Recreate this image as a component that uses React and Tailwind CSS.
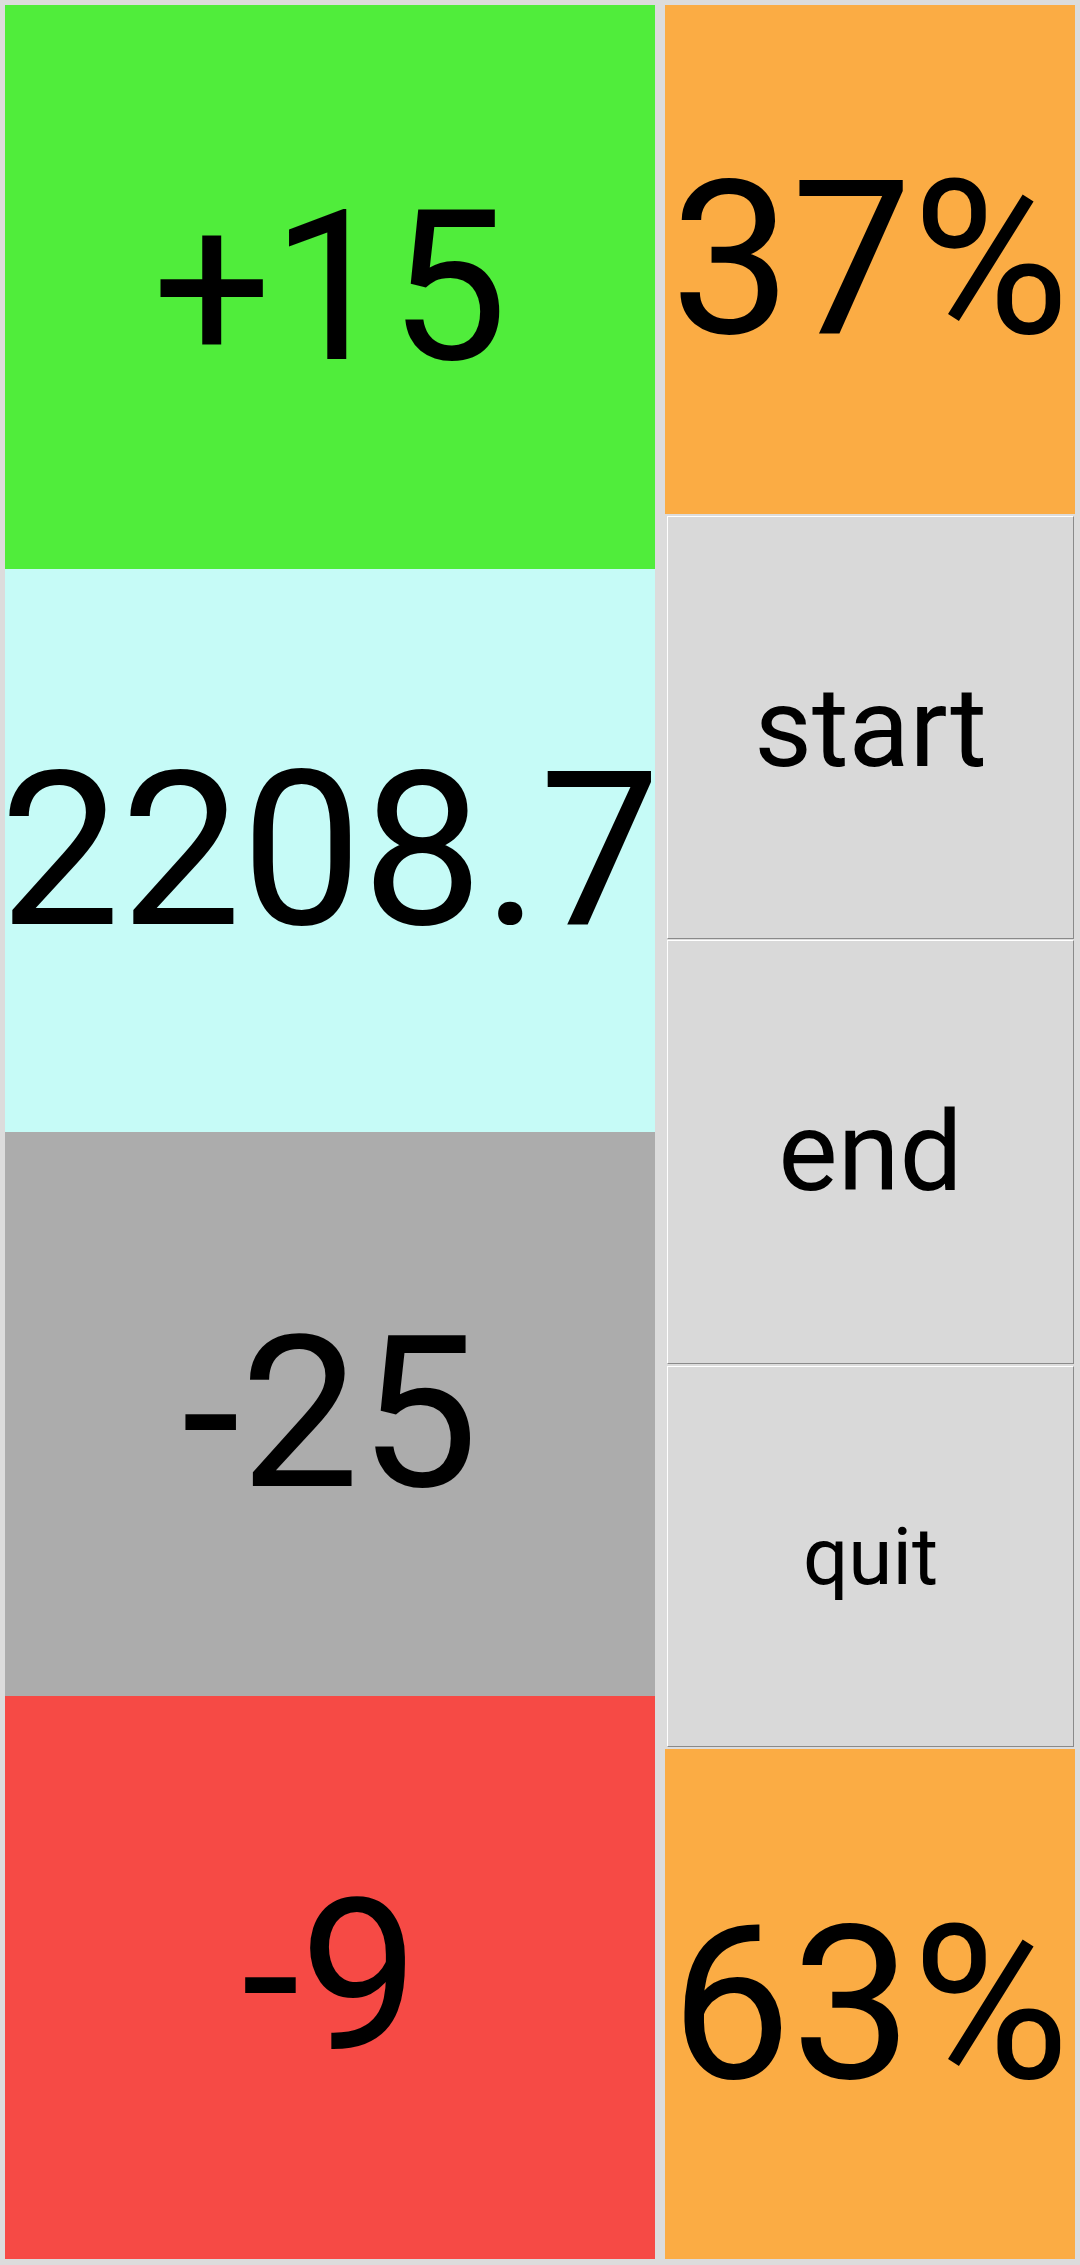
export default function App() {
  const cell = "flex items-center justify-center overflow-hidden text-black leading-none";
  const btn =
    "flex items-center justify-center bg-[#d9d9d9] border-t border-l border-t-white border-l-white border-b border-r border-b-[#8a8a8a] border-r-[#8a8a8a] text-black leading-none";
  return (
    <div
      className="w-[1080px] h-[2265px] bg-[#dcdcdc] pt-[5px] pl-[5px] pr-[5px] pb-[6px] flex flex-row gap-[10px]"
      style={{ fontFamily: "Roboto, 'Noto Sans', sans-serif" }}
    >
      <div className="w-[650px] flex flex-col">
        <div className={`flex-1 bg-[#50ed3b] text-[210px] ${cell}`}>+15</div>
        <div className={`flex-1 bg-[#c6fbf7] text-[215px] ${cell}`}>
          <span className="whitespace-nowrap">2208.7</span>
        </div>
        <div className={`flex-1 bg-[#acacac] text-[212px] ${cell}`}>-25</div>
        <div className={`flex-1 bg-[#f64a45] text-[212px] ${cell}`}>-9</div>
      </div>
      <div className="w-[410px] flex flex-col">
        <div className={`h-[509px] bg-[#fbac44] text-[215px] ${cell}`}>
          <span className="whitespace-nowrap">37%</span>
        </div>
        <div className="h-[1235px] flex flex-col pt-[2px] pb-[2px] pl-[2px] pr-[1px]">
          <div className={`h-[423px] text-[112px] ${btn}`}>start</div>
          <div className={`h-[424px] mt-[1px] text-[112px] ${btn}`}>end</div>
          <div className={`h-[381px] mt-[2px] text-[80px] ${btn}`}>quit</div>
        </div>
        <div className={`flex-1 bg-[#fbac44] text-[215px] ${cell}`}>
          <span className="whitespace-nowrap">63%</span>
        </div>
      </div>
    </div>
  );
}
